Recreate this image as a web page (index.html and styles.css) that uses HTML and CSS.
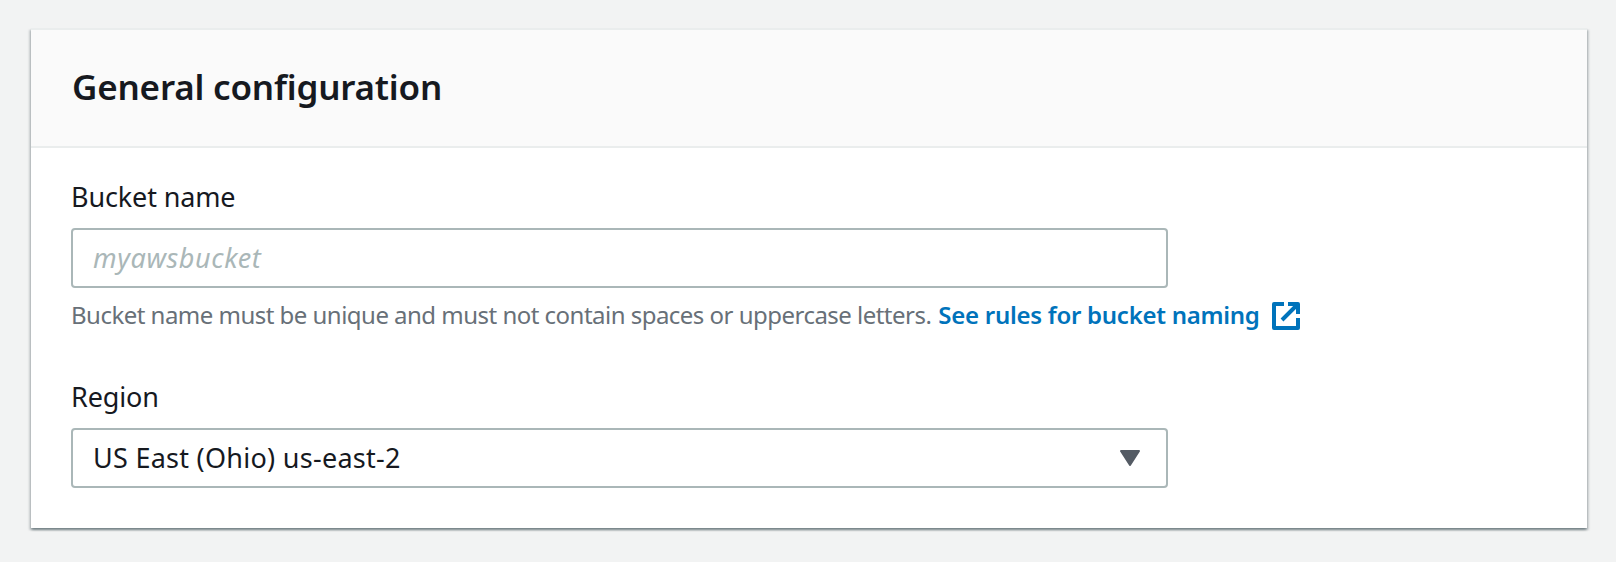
FILE: index.html
```html
<!DOCTYPE html>
<html lang="en">
<head>
<meta charset="utf-8">
<title>General configuration</title>
<link rel="stylesheet" href="styles.css">
</head>
<body>
<section class="card">
  <header class="card-header"><h2 class="card-title">General configuration</h2></header>
  <div class="card-body">
    <div class="field">
      <label class="label" for="bucket">Bucket name</label>
      <input class="control input" id="bucket" type="text" placeholder="myawsbucket">
      <div class="hint"><span class="hint-text">Bucket name must be unique and must not contain spaces or uppercase letters.</span><a class="link" href="#"><span class="link-text">See rules for bucket naming</span><svg class="external" viewBox="0 0 28 28" aria-hidden="true"><path d="M12 2H2V26H26V16M16 2H26V12M25.500 2.500L10 18" fill="none" stroke="currentColor" stroke-width="4" stroke-linejoin="round"/></svg></a></div>
    </div>
    <div class="field">
      <span class="label">Region</span>
      <div class="control select" role="combobox" aria-expanded="false" tabindex="0"><span class="select-value">US East (Ohio) us-east-2</span><svg class="caret" viewBox="0 0 20 16" aria-hidden="true"><path d="M1 1H19L10 15Z" fill="currentColor" stroke="currentColor" stroke-width="2" stroke-linejoin="round"/></svg></div>
    </div>
  </div>
</section>
</body>
</html>
```
FILE: styles.css
```css
* { box-sizing: border-box; }
body {
  margin: 0;
  padding: 28px 29px 0 31px;
  height: 562px;
  overflow: hidden;
  background: #f2f3f3;
  color: #16191f;
  font-family: "Noto Sans", sans-serif;
  font-size: 27px;
}
.card {
  height: 500px;
  background: #fff;
  border-top: 2px solid #eaeded;
  box-shadow: 0 2px 2px 0 rgba(0, 28, 36, .33), 2px 2px 2px 0 rgba(0, 28, 36, .15), -2px 2px 2px 0 rgba(0, 28, 36, .15);
}
.card-header {
  height: 118px;
  padding: 33px 40px 0 41px;
  background: #fafafa;
  border-bottom: 2px solid #eaeded;
}
.card-title { margin: 0; font-size: 35px; line-height: 48px; font-weight: 600; letter-spacing: -.2px; }
.card-body { display: flex; flex-direction: column; gap: 46px; padding: 30px 40px 0; }
.field { display: flex; flex-direction: column; align-items: flex-start; }
.label { height: 50px; line-height: 38px; letter-spacing: -.14px; white-space: nowrap; }
.control {
  width: 1097px;
  height: 60px;
  border: 2px solid #aab7b8;
  border-radius: 4px;
  background: #fff;
  padding: 0 20px 2px;
  color: #16191f;
  font: inherit;
  outline: none;
}
.input { letter-spacing: .62px; }
.input::placeholder { color: #aab7b8; font-style: italic; opacity: 1; }
.hint { display: flex; align-items: center; height: 32px; margin-top: 12px; gap: 7px; font-size: 24px; line-height: 32px; color: #687078; white-space: nowrap; }
.hint-text { letter-spacing: -.52px; padding-bottom: 2px; }
.link { display: flex; align-items: center; gap: 12px; color: #0073bb; font-weight: 600; text-decoration: none; }
.link-text { letter-spacing: -.27px; padding-bottom: 2px; }
.external { width: 28px; height: 28px; }
.select { display: flex; align-items: center; justify-content: space-between; padding: 0 26px 0 20px; }
.select-value { letter-spacing: .27px; padding-bottom: 2px; }
.caret { width: 20px; height: 16px; color: #545b64; }
```
